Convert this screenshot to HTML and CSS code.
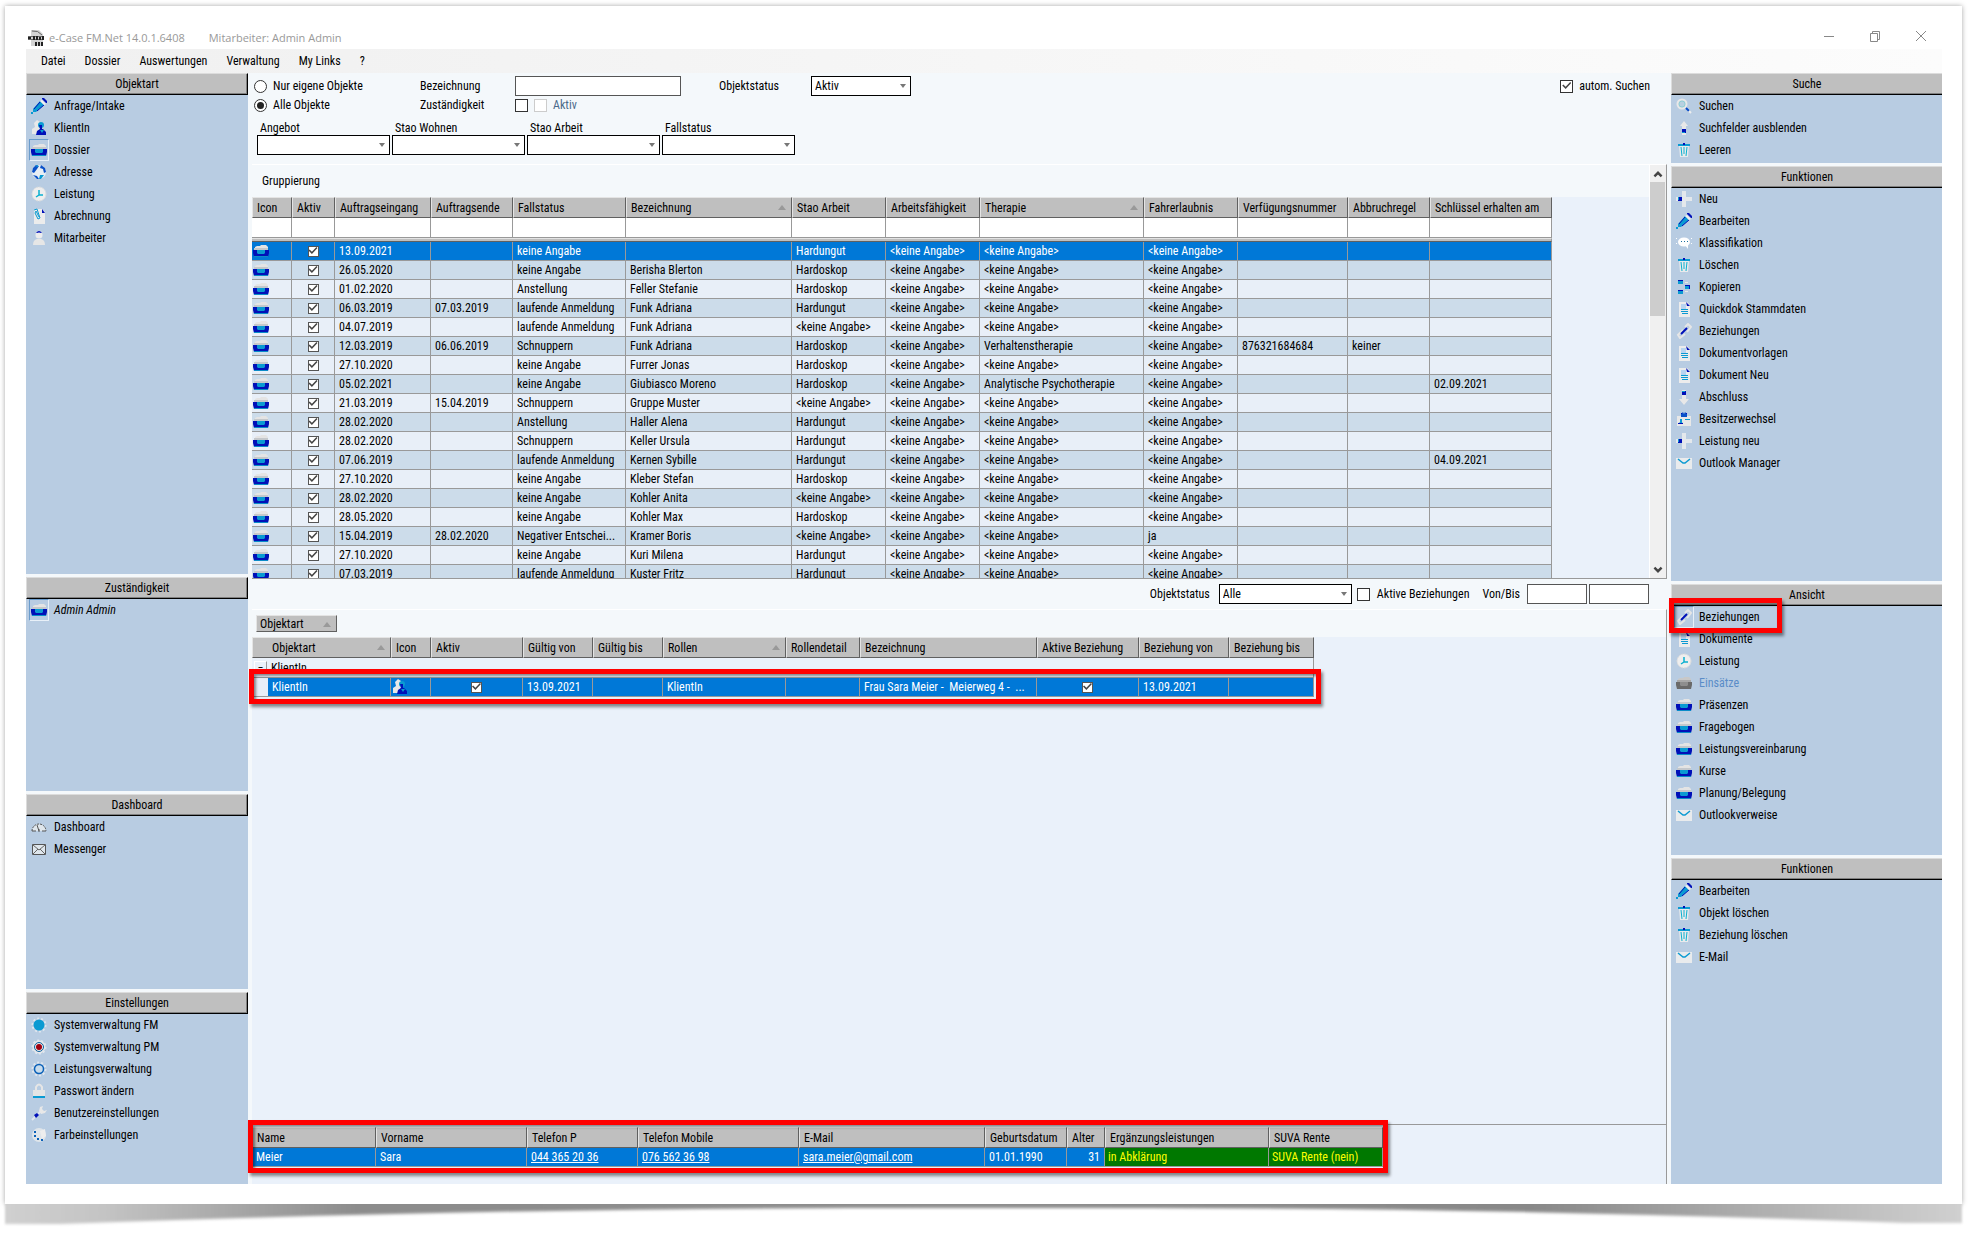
FILE: index.html
```html
<!DOCTYPE html>
<html lang="de">
<head>
<meta charset="utf-8">
<title>e-Case FM.Net 14.0.1.6408</title>
<link rel="stylesheet" href="styles.css">
</head>
<body>
<svg class="sprite" aria-hidden="true">
  <symbol id="box" viewBox="0 0 16 16"><path d="M2 6V4l2-1h3l1-1h5l2 2v2z" fill="#e4e4e4"/><path d="M1 5h14v2H1z" fill="#c4c8cc"/><path d="M0 7h16v3l-1 4H1l-1-4z" fill="#0010b8"/><path d="M4 7h8v3l-1 1H5l-1-1z" fill="#0a9ad2"/><path d="M1 13h14v1H1z" fill="#0a8cc8"/></symbol>
  <symbol id="boxoff" viewBox="0 0 16 16"><path d="M2 6V4l2-1h3l1-1h5l2 2v2z" fill="#c8c8c8"/><path d="M1 5h14v2H1z" fill="#a8a8a8"/><path d="M0 7h16v3l-1 4H1l-1-4z" fill="#6a6a6a"/><path d="M4 7h8v3l-1 1H5l-1-1z" fill="#8e8e8e"/></symbol>
  <symbol id="pen" viewBox="0 0 16 16"><path d="M2 11l7-8 4 4-8 7-3 0z" fill="#0a9ad2"/><path d="M3 11l6-7M6 13l7-6" stroke="#0010b8" stroke-width="1" fill="none"/><path d="M9 3l2-1 4 4-2 1z" fill="#f0f0f0"/><path d="M11 0h2l3 3v2l-1 0-4-4z" fill="#0010b8"/><path d="M0 14h2v2H0z" fill="#0a9ad2"/></symbol>
  <symbol id="person" viewBox="0 0 16 16"><path d="M1 14V9l3-2-1-4 3-3 3 2v6l-2 6z" fill="#e8e8e8"/><circle cx="10" cy="5" r="3" fill="#0a9ad2"/><path d="M8 5h3v4H9z" fill="#0010b8"/><path d="M5 15l1-4 3-2h3l3 3v3z" fill="#0010b8"/><path d="M9 10l2 3 2-3z" fill="#0a9ad2"/></symbol>
  <symbol id="globe" viewBox="0 0 16 16"><circle cx="8" cy="8" r="7" fill="#e8eef4"/><path d="M2 4l3-3 3 1-2 3-3 4-2-1zM10 1l4 3 1 4-2 1-1-4-3-1zM2 11l4 1 2 3H6z" fill="#0a50c8"/><path d="M9 11l4 0-3 4H8zM4 2l3-1v2z" fill="#0a9ad2"/></symbol>
  <symbol id="clock" viewBox="0 0 16 16"><circle cx="8" cy="8" r="7" fill="#eeeeee" stroke="#dcdcdc" stroke-width="1" stroke-dasharray="2 1"/><path d="M8 4v5h4M8 9l-3 2" stroke="#0ab0d0" stroke-width="1.500" fill="none"/></symbol>
  <symbol id="bill" viewBox="0 0 16 16"><path d="M3 1h8l3 3v12H3z" fill="#ececec"/><path d="M11 1l3 4h-3z" fill="#0010b8"/><path d="M3 2l3-1 3 9-2 1-3-6 1-2 3 6" stroke="#0a9ad2" fill="none"/></symbol>
  <symbol id="staff" viewBox="0 0 16 16"><circle cx="8" cy="5" r="3.500" fill="#ececec"/><path d="M5 3q3-4 6 0l-1 0q-2-1-4 0z" fill="#0010b8"/><path d="M2 15q0-5 4-6h4q4 1 4 6z" fill="#e6e6e6"/></symbol>
  <symbol id="search" viewBox="0 0 16 16"><circle cx="6" cy="6" r="4.500" fill="#b8d0e0" stroke="#e8e8e8" stroke-width="2"/><circle cx="6" cy="6" r="3" fill="none" stroke="#7cc" stroke-width=".6"/><path d="M10 10l3 3" stroke="#0a4cc8" stroke-width="2"/><path d="M13 13l2 2" stroke="#eee" stroke-width="2"/></symbol>
  <symbol id="up" viewBox="0 0 16 16"><path d="M8 1l4 5h-2v9H6V6H4z" fill="#e8e8e8"/><path d="M6 9h4v4H6z" fill="#0010b8"/><path d="M6 12h3v1H6z" fill="#0a9ad2"/></symbol>
  <symbol id="down" viewBox="0 0 16 16"><path d="M8 16l5-6h-3V1H6v9H3z" fill="#e8e8e8"/><path d="M6 2h4v4H6z" fill="#0010b8"/><path d="M6 2h3v1H6z" fill="#0a9ad2"/></symbol>
  <symbol id="bin" viewBox="0 0 16 16"><path d="M3 3h10l-1 12H4z" fill="#e8eaec"/><path d="M2 2h12v2H2z" fill="#0a9ad2"/><path d="M7 1h2v2H7z" fill="#0010b8"/><path d="M5 5l1 9M8 5v7M11 5l-1 9" stroke="#0ab0d0" fill="none"/></symbol>
  <symbol id="plus" viewBox="0 0 16 16"><path d="M6 0h4v6h6v4h-6v6H6v-6H0V6h6z" fill="#e4e8ec"/><path d="M2 6h4v4H2z" fill="#0010b8"/><path d="M2 6h1v3H2z" fill="#0a9ad2"/></symbol>
  <symbol id="bubble" viewBox="0 0 16 16"><ellipse cx="8" cy="7" rx="6" ry="4.500" fill="#fff"/><path d="M9 10l3 4 0-5zM0 3h1v1H0zM0 8h1v1H0zM15 3h1v1h-1zM15 8h1v1h-1z" fill="#fff"/><path d="M5 6h1v1H5zM8 6h1v1H8zM11 6h1v1h-1z" fill="#1a70a0"/></symbol>
  <symbol id="copy" viewBox="0 0 16 16"><path d="M2 1h5v4H2zM9 6h5v4H9zM2 11h5v4H2z" fill="#0a9ad2"/><path d="M2 1h5v1H2zM9 6h5v1H9zM2 11h5v1H2zM13 7h1v3h-1z" fill="#0010b8"/><path d="M9 3h3v1H9zM9 12h3v1H9z" fill="#e8e8e8"/></symbol>
  <symbol id="doc" viewBox="0 0 16 16"><path d="M3 1h8l3 3v12H3z" fill="#ececec"/><path d="M5 3h5v5H5z" fill="#b8d4f0"/><path d="M10 1l4 4h-3z" fill="#0010b8"/><path d="M5 8h7v1H5zM5 10h7v1H5zM6 12h6v1H6z" fill="#0a9ad2"/></symbol>
  <symbol id="link" viewBox="0 0 16 16"><path d="M9 4l3-3 3 3-4 5M7 7l-5 5 2 3 5-4" stroke="#e6e6e6" stroke-width="2" fill="none"/><path d="M5 11l6-6" stroke="#0010b8" stroke-width="2"/></symbol>
  <symbol id="owner" viewBox="0 0 16 16"><path d="M1 5h14v10H1z" fill="#e8e8e8"/><path d="M5 3l2-2 1 2 1-2 2 2v3H5z" fill="#0a50c8"/><path d="M4 8h2v3l1 2H2l2-2z" fill="#0a9ad2"/><path d="M2 12h5v1H2zM5 2h1v1H5zM10 2h1v1h-1z" fill="#0010b8"/><path d="M9 8h5v1H9z" fill="#0a9ad2"/></symbol>
  <symbol id="mail" viewBox="0 0 16 16"><path d="M0 3h16v11H0z" fill="#e9ebed"/><path d="M2 4l5 4h2l5-4" stroke="#0a9ad2" stroke-width="1.500" fill="none"/></symbol>
  <symbol id="gauge" viewBox="0 0 16 16"><path d="M1 12a7 7 0 1 1 14 0" fill="#dfe6ec" stroke="#555" stroke-dasharray="2 1"/><path d="M1 12h4M11 12h4M8 12L6 6M8 10v3" stroke="#555" fill="none"/></symbol>
  <symbol id="envelope" viewBox="0 0 16 16"><path d="M1.500 3.500h13v10h-13z" fill="#dfe6ec" stroke="#555"/><path d="M2 4l6 5 6-5M2 13l5-5M14 13L9 8" stroke="#666" fill="none"/></symbol>
  <symbol id="gearfull" viewBox="0 0 16 16"><circle cx="8" cy="8" r="6.500" fill="none" stroke="#dfe6ee" stroke-width="2" stroke-dasharray="2 2"/><circle cx="8" cy="8" r="5.500" fill="#0a9ad2"/></symbol>
  <symbol id="gearred" viewBox="0 0 16 16"><circle cx="8" cy="8" r="6.500" fill="#e8e8e8" stroke="#dfe6ee" stroke-width="2" stroke-dasharray="2 2"/><circle cx="8" cy="8" r="4.500" fill="#e8e8e8" stroke="#0a60a0"/><circle cx="8" cy="8" r="3" fill="#a00010"/></symbol>
  <symbol id="gear" viewBox="0 0 16 16"><circle cx="8" cy="8" r="6.500" fill="none" stroke="#dfe6ee" stroke-width="2" stroke-dasharray="2 2"/><circle cx="8" cy="8" r="4.500" fill="#c8dcec" stroke="#0a60b8" stroke-width="1.500"/></symbol>
  <symbol id="lock" viewBox="0 0 16 16"><path d="M5 8V4q3-5 6 0v4" stroke="#e6e6e6" stroke-width="2" fill="none"/><path d="M2 7h12v8H2z" fill="#e4e4e4"/><path d="M2 13h12v2H2z" fill="#0a9ad2"/></symbol>
  <symbol id="wrench" viewBox="0 0 16 16"><path d="M1 15l9-9" stroke="#dfe6ee" stroke-width="2"/><path d="M8 6l1-4 3-1-1 3 2 2 3-1-2 3-4 1z" fill="#e8e8e8"/><path d="M3 10l3-2 2 2-3 3z" fill="#0010b8"/></symbol>
  <symbol id="palette" viewBox="0 0 16 16"><circle cx="8" cy="8" r="7" fill="#dfe5ea"/><path d="M9 4l5-2 1 7-4 3z" fill="#eee"/><path d="M3 4h2v2H3zM3 8h2v2H3zM6 11h2v2H6zM10 12h2v2h-2z" fill="#0a60b8"/></symbol>
</svg>

<div class="paper">
  <header class="titlebar">
    <svg class="logo" viewBox="0 0 16 16" aria-hidden="true"><path d="M3 0h8l4 4v12H3z" fill="#d4d4d4"/><path d="M4 1q6-1 10 4" stroke="#666" fill="none"/><path d="M0 6h15v1H0zM0 9h15v1H0z" fill="#666"/><path d="M0 7h3v2H0zM5 6h2v4H5zM8 6h2v4H8zM11 7h2v3h-2zM14 6h2v4h-2zM7 12h2v4H7zM10 12h2v4h-2zM13 12h2v4h-2z" fill="#222"/></svg>
    <span class="app">e-Case FM.Net 14.0.1.6408</span>
    <span>Mitarbeiter: Admin Admin</span>
    <div class="winbtns">
      <button aria-label="Minimieren"><svg viewBox="0 0 12 12"><path d="M1 6.500h10"/></svg></button>
      <button aria-label="Wiederherstellen"><svg viewBox="0 0 12 12"><path d="M1.500 3.500h7v8h-7zM3.500 3V1.500h7v8H9"/></svg></button>
      <button aria-label="Schliessen"><svg viewBox="0 0 12 12"><path d="M1 1l10 10M11 1L1 11"/></svg></button>
    </div>
  </header>

  <div class="window">
    <nav class="menu">
      <button>Datei</button><button>Dossier</button><button>Auswertungen</button><button>Verwaltung</button><button>My Links</button><button>?</button>
    </nav>

    <div class="columns">
      <aside class="side left">
        <section class="panel p-objektart">
          <h2>Objektart</h2>
          <button class="item"><svg><use href="#pen"/></svg>Anfrage/Intake</button>
          <button class="item"><svg><use href="#person"/></svg>KlientIn</button>
          <button class="item pressed"><svg><use href="#box"/></svg>Dossier</button>
          <button class="item"><svg><use href="#globe"/></svg>Adresse</button>
          <button class="item"><svg><use href="#clock"/></svg>Leistung</button>
          <button class="item"><svg><use href="#bill"/></svg>Abrechnung</button>
          <button class="item"><svg><use href="#staff"/></svg>Mitarbeiter</button>
        </section>
        <section class="panel p-zustaendigkeit">
          <h2>Zuständigkeit</h2>
          <button class="item pressed"><svg><use href="#box"/></svg><em>Admin Admin</em></button>
        </section>
        <section class="panel p-dashboard">
          <h2>Dashboard</h2>
          <button class="item"><svg><use href="#gauge"/></svg>Dashboard</button>
          <button class="item"><svg><use href="#envelope"/></svg>Messenger</button>
        </section>
        <section class="panel p-rest">
          <h2>Einstellungen</h2>
          <button class="item"><svg><use href="#gearfull"/></svg>Systemverwaltung FM</button>
          <button class="item"><svg><use href="#gearred"/></svg>Systemverwaltung PM</button>
          <button class="item"><svg><use href="#gear"/></svg>Leistungsverwaltung</button>
          <button class="item"><svg><use href="#lock"/></svg>Passwort ändern</button>
          <button class="item"><svg><use href="#wrench"/></svg>Benutzereinstellungen</button>
          <button class="item"><svg><use href="#palette"/></svg>Farbeinstellungen</button>
        </section>
      </aside>

      <main class="center">
        <form class="filter">
          <div class="criteria">
            <label><input type="radio" name="scope">Nur eigene Objekte</label>
            <label for="bez">Bezeichnung</label>
            <input type="text" id="bez">
            <label for="ostat">Objektstatus</label>
            <select id="ostat"><option>Aktiv</option></select>
            <label class="auto"><input type="checkbox" checked>autom. Suchen</label>
            <label><input type="radio" name="scope" checked>Alle Objekte</label>
            <label for="zust">Zuständigkeit</label>
            <div class="pair"><input type="checkbox" id="zust"><label class="dim"><input type="checkbox" disabled>Aktiv</label></div>
          </div>
          <div class="combos">
            <label>Angebot<select><option></option></select></label>
            <label>Stao Wohnen<select><option></option></select></label>
            <label>Stao Arbeit<select><option></option></select></label>
            <label>Fallstatus<select><option></option></select></label>
          </div>
        </form>

        <section class="grid-area">
          <div class="grid-body">
            <div class="groupbar">Gruppierung</div>
            <table class="grid orders">
              <colgroup><col class="w40"><col class="w43"><col class="w96"><col class="w82"><col class="w113"><col class="w166"><col class="w94"><col class="w94"><col class="w164"><col class="w94"><col class="w110"><col class="w82"><col class="w122"></colgroup>
              <thead>
                <tr><th>Icon</th><th>Aktiv</th><th>Auftragseingang</th><th>Auftragsende</th><th>Fallstatus</th><th class="sorted">Bezeichnung</th><th>Stao Arbeit</th><th>Arbeitsfähigkeit</th><th class="sorted">Therapie</th><th>Fahrerlaubnis</th><th>Verfügungsnummer</th><th>Abbruchregel</th><th>Schlüssel erhalten am</th></tr>
                <tr class="search"><td></td><td></td><td></td><td></td><td></td><td></td><td></td><td></td><td></td><td></td><td></td><td></td><td></td></tr>
                <tr class="band"><td colspan="13"></td></tr>
              </thead>
              <tbody>
                <tr class="selected"><td><svg><use href="#box"/></svg></td><td><input type="checkbox" checked aria-label="Aktiv"></td><td>13.09.2021</td><td></td><td>keine Angabe</td><td></td><td>Hardungut</td><td>&lt;keine Angabe&gt;</td><td>&lt;keine Angabe&gt;</td><td>&lt;keine Angabe&gt;</td><td></td><td></td><td></td></tr>
                <tr><td><svg><use href="#box"/></svg></td><td><input type="checkbox" checked aria-label="Aktiv"></td><td>26.05.2020</td><td></td><td>keine Angabe</td><td>Berisha Blerton</td><td>Hardoskop</td><td>&lt;keine Angabe&gt;</td><td>&lt;keine Angabe&gt;</td><td>&lt;keine Angabe&gt;</td><td></td><td></td><td></td></tr>
                <tr><td><svg><use href="#box"/></svg></td><td><input type="checkbox" checked aria-label="Aktiv"></td><td>01.02.2020</td><td></td><td>Anstellung</td><td>Feller Stefanie</td><td>Hardoskop</td><td>&lt;keine Angabe&gt;</td><td>&lt;keine Angabe&gt;</td><td>&lt;keine Angabe&gt;</td><td></td><td></td><td></td></tr>
                <tr><td><svg><use href="#box"/></svg></td><td><input type="checkbox" checked aria-label="Aktiv"></td><td>06.03.2019</td><td>07.03.2019</td><td>laufende Anmeldung</td><td>Funk Adriana</td><td>Hardungut</td><td>&lt;keine Angabe&gt;</td><td>&lt;keine Angabe&gt;</td><td>&lt;keine Angabe&gt;</td><td></td><td></td><td></td></tr>
                <tr><td><svg><use href="#box"/></svg></td><td><input type="checkbox" checked aria-label="Aktiv"></td><td>04.07.2019</td><td></td><td>laufende Anmeldung</td><td>Funk Adriana</td><td>&lt;keine Angabe&gt;</td><td>&lt;keine Angabe&gt;</td><td>&lt;keine Angabe&gt;</td><td>&lt;keine Angabe&gt;</td><td></td><td></td><td></td></tr>
                <tr><td><svg><use href="#box"/></svg></td><td><input type="checkbox" checked aria-label="Aktiv"></td><td>12.03.2019</td><td>06.06.2019</td><td>Schnuppern</td><td>Funk Adriana</td><td>Hardoskop</td><td>&lt;keine Angabe&gt;</td><td>Verhaltenstherapie</td><td>&lt;keine Angabe&gt;</td><td>876321684684</td><td>keiner</td><td></td></tr>
                <tr><td><svg><use href="#box"/></svg></td><td><input type="checkbox" checked aria-label="Aktiv"></td><td>27.10.2020</td><td></td><td>keine Angabe</td><td>Furrer Jonas</td><td>Hardoskop</td><td>&lt;keine Angabe&gt;</td><td>&lt;keine Angabe&gt;</td><td>&lt;keine Angabe&gt;</td><td></td><td></td><td></td></tr>
                <tr><td><svg><use href="#box"/></svg></td><td><input type="checkbox" checked aria-label="Aktiv"></td><td>05.02.2021</td><td></td><td>keine Angabe</td><td>Giubiasco Moreno</td><td>Hardoskop</td><td>&lt;keine Angabe&gt;</td><td>Analytische Psychotherapie</td><td>&lt;keine Angabe&gt;</td><td></td><td></td><td>02.09.2021</td></tr>
                <tr><td><svg><use href="#box"/></svg></td><td><input type="checkbox" checked aria-label="Aktiv"></td><td>21.03.2019</td><td>15.04.2019</td><td>Schnuppern</td><td>Gruppe Muster</td><td>&lt;keine Angabe&gt;</td><td>&lt;keine Angabe&gt;</td><td>&lt;keine Angabe&gt;</td><td>&lt;keine Angabe&gt;</td><td></td><td></td><td></td></tr>
                <tr><td><svg><use href="#box"/></svg></td><td><input type="checkbox" checked aria-label="Aktiv"></td><td>28.02.2020</td><td></td><td>Anstellung</td><td>Haller Alena</td><td>Hardungut</td><td>&lt;keine Angabe&gt;</td><td>&lt;keine Angabe&gt;</td><td>&lt;keine Angabe&gt;</td><td></td><td></td><td></td></tr>
                <tr><td><svg><use href="#box"/></svg></td><td><input type="checkbox" checked aria-label="Aktiv"></td><td>28.02.2020</td><td></td><td>Schnuppern</td><td>Keller Ursula</td><td>Hardungut</td><td>&lt;keine Angabe&gt;</td><td>&lt;keine Angabe&gt;</td><td>&lt;keine Angabe&gt;</td><td></td><td></td><td></td></tr>
                <tr><td><svg><use href="#box"/></svg></td><td><input type="checkbox" checked aria-label="Aktiv"></td><td>07.06.2019</td><td></td><td>laufende Anmeldung</td><td>Kernen Sybille</td><td>Hardungut</td><td>&lt;keine Angabe&gt;</td><td>&lt;keine Angabe&gt;</td><td>&lt;keine Angabe&gt;</td><td></td><td></td><td>04.09.2021</td></tr>
                <tr><td><svg><use href="#box"/></svg></td><td><input type="checkbox" checked aria-label="Aktiv"></td><td>27.10.2020</td><td></td><td>keine Angabe</td><td>Kleber Stefan</td><td>Hardoskop</td><td>&lt;keine Angabe&gt;</td><td>&lt;keine Angabe&gt;</td><td>&lt;keine Angabe&gt;</td><td></td><td></td><td></td></tr>
                <tr><td><svg><use href="#box"/></svg></td><td><input type="checkbox" checked aria-label="Aktiv"></td><td>28.02.2020</td><td></td><td>keine Angabe</td><td>Kohler Anita</td><td>&lt;keine Angabe&gt;</td><td>&lt;keine Angabe&gt;</td><td>&lt;keine Angabe&gt;</td><td>&lt;keine Angabe&gt;</td><td></td><td></td><td></td></tr>
                <tr><td><svg><use href="#box"/></svg></td><td><input type="checkbox" checked aria-label="Aktiv"></td><td>28.05.2020</td><td></td><td>keine Angabe</td><td>Kohler Max</td><td>Hardoskop</td><td>&lt;keine Angabe&gt;</td><td>&lt;keine Angabe&gt;</td><td>&lt;keine Angabe&gt;</td><td></td><td></td><td></td></tr>
                <tr><td><svg><use href="#box"/></svg></td><td><input type="checkbox" checked aria-label="Aktiv"></td><td>15.04.2019</td><td>28.02.2020</td><td>Negativer Entschei...</td><td>Kramer Boris</td><td>&lt;keine Angabe&gt;</td><td>&lt;keine Angabe&gt;</td><td>&lt;keine Angabe&gt;</td><td>ja</td><td></td><td></td><td></td></tr>
                <tr><td><svg><use href="#box"/></svg></td><td><input type="checkbox" checked aria-label="Aktiv"></td><td>27.10.2020</td><td></td><td>keine Angabe</td><td>Kuri Milena</td><td>Hardungut</td><td>&lt;keine Angabe&gt;</td><td>&lt;keine Angabe&gt;</td><td>&lt;keine Angabe&gt;</td><td></td><td></td><td></td></tr>
                <tr><td><svg><use href="#box"/></svg></td><td><input type="checkbox" checked aria-label="Aktiv"></td><td>07.03.2019</td><td></td><td>laufende Anmeldung</td><td>Kuster Fritz</td><td>Hardungut</td><td>&lt;keine Angabe&gt;</td><td>&lt;keine Angabe&gt;</td><td>&lt;keine Angabe&gt;</td><td></td><td></td><td></td></tr>
              </tbody>
            </table>
          </div>
          <div class="scrollbar">
            <button aria-label="Nach oben"><svg viewBox="0 0 10 10"><path d="M2 7l3-3 3 3"/></svg></button>
            <div class="thumb"></div>
            <button aria-label="Nach unten"><svg viewBox="0 0 10 10"><path d="M2 3l3 3 3-3"/></svg></button>
          </div>
        </section>

        <form class="relbar">
          <label for="rstat">Objektstatus</label>
          <select id="rstat"><option>Alle</option></select>
          <label class="active"><input type="checkbox">Aktive Beziehungen</label>
          <label for="von">Von/Bis</label>
          <input type="text" id="von"><input type="text" aria-label="Bis">
        </form>

        <section class="rel-area">
          <div class="groupbar"><button class="grouper">Objektart</button></div>
          <div class="marked">
            <table class="grid relations">
              <colgroup><col class="w139"><col class="w40"><col class="w92"><col class="w70"><col class="w70"><col class="w123"><col class="w74"><col class="w177"><col class="w102"><col class="w90"><col class="w85"></colgroup>
              <thead><tr><th class="sorted lead">Objektart</th><th>Icon</th><th>Aktiv</th><th>Gültig von</th><th>Gültig bis</th><th class="sorted">Rollen</th><th>Rollendetail</th><th>Bezeichnung</th><th>Aktive Beziehung</th><th>Beziehung von</th><th>Beziehung bis</th></tr></thead>
              <tbody>
                <tr class="group"><td colspan="11"><button class="toggle" aria-label="Zuklappen">−</button>KlientIn</td></tr>
                <tr class="selected"><td class="rowhead">KlientIn</td><td><svg><use href="#person"/></svg></td><td><input type="checkbox" checked aria-label="Aktiv"></td><td>13.09.2021</td><td></td><td>KlientIn</td><td></td><td>Frau Sara Meier -&nbsp; Meierweg 4 -&nbsp; ...</td><td><input type="checkbox" checked aria-label="Aktive Beziehung"></td><td>13.09.2021</td><td></td></tr>
              </tbody>
            </table>
            <div class="mark mark-row"></div>
          </div>
        </section>

        <section class="detail">
          <div class="marked">
            <table class="grid person">
              <colgroup><col class="w124"><col class="w151"><col class="w111"><col class="w161"><col class="w186"><col class="w82"><col class="w38"><col class="w164"><col class="w114"></colgroup>
              <thead><tr><th>Name</th><th>Vorname</th><th>Telefon P</th><th>Telefon Mobile</th><th>E-Mail</th><th>Geburtsdatum</th><th>Alter</th><th>Ergänzungsleistungen</th><th>SUVA Rente</th></tr></thead>
              <tbody><tr class="selected"><td>Meier</td><td>Sara</td><td><a href="#">044 365 20 36</a></td><td><a href="#">076 562 36 98</a></td><td><a href="#">sara.meier@gmail.com</a></td><td>01.01.1990</td><td class="num">31</td><td class="flag">in Abklärung</td><td class="flag">SUVA Rente (nein)</td></tr></tbody>
            </table>
            <div class="mark mark-detail"></div>
          </div>
        </section>
      </main>

      <aside class="side right">
        <section class="panel p-suche">
          <h2>Suche</h2>
          <button class="item"><svg><use href="#search"/></svg>Suchen</button>
          <button class="item"><svg><use href="#up"/></svg>Suchfelder ausblenden</button>
          <button class="item"><svg><use href="#bin"/></svg>Leeren</button>
        </section>
        <section class="panel p-funktionen">
          <h2>Funktionen</h2>
          <button class="item"><svg><use href="#plus"/></svg>Neu</button>
          <button class="item"><svg><use href="#pen"/></svg>Bearbeiten</button>
          <button class="item"><svg><use href="#bubble"/></svg>Klassifikation</button>
          <button class="item"><svg><use href="#bin"/></svg>Löschen</button>
          <button class="item"><svg><use href="#copy"/></svg>Kopieren</button>
          <button class="item"><svg><use href="#doc"/></svg>Quickdok Stammdaten</button>
          <button class="item"><svg><use href="#link"/></svg>Beziehungen</button>
          <button class="item"><svg><use href="#doc"/></svg>Dokumentvorlagen</button>
          <button class="item"><svg><use href="#doc"/></svg>Dokument Neu</button>
          <button class="item"><svg><use href="#down"/></svg>Abschluss</button>
          <button class="item"><svg><use href="#owner"/></svg>Besitzerwechsel</button>
          <button class="item"><svg><use href="#plus"/></svg>Leistung neu</button>
          <button class="item"><svg><use href="#mail"/></svg>Outlook Manager</button>
        </section>
        <section class="panel p-ansicht">
          <h2>Ansicht</h2>
          <div class="marked">
            <button class="item pressed"><svg><use href="#link"/></svg>Beziehungen</button>
            <div class="mark mark-item"></div>
          </div>
          <button class="item"><svg><use href="#doc"/></svg>Dokumente</button>
          <button class="item"><svg><use href="#clock"/></svg>Leistung</button>
          <button class="item" disabled><svg><use href="#boxoff"/></svg>Einsätze</button>
          <button class="item"><svg><use href="#box"/></svg>Präsenzen</button>
          <button class="item"><svg><use href="#box"/></svg>Fragebogen</button>
          <button class="item"><svg><use href="#box"/></svg>Leistungsvereinbarung</button>
          <button class="item"><svg><use href="#box"/></svg>Kurse</button>
          <button class="item"><svg><use href="#box"/></svg>Planung/Belegung</button>
          <button class="item"><svg><use href="#mail"/></svg>Outlookverweise</button>
        </section>
        <section class="panel p-rest">
          <h2>Funktionen</h2>
          <button class="item"><svg><use href="#pen"/></svg>Bearbeiten</button>
          <button class="item"><svg><use href="#bin"/></svg>Objekt löschen</button>
          <button class="item"><svg><use href="#bin"/></svg>Beziehung löschen</button>
          <button class="item"><svg><use href="#mail"/></svg>E-Mail</button>
        </section>
      </aside>
    </div>
  </div>
</div>
<svg class="curl" viewBox="0 0 1976 29" preserveAspectRatio="none" aria-hidden="true">
  <defs>
    <linearGradient id="curlfill"><stop offset="0" stop-color="#d0d0d0"/><stop offset=".05" stop-color="#c4c4c4"/><stop offset=".18" stop-color="#8c8c8c"/><stop offset=".5" stop-color="#8e8e8e"/><stop offset=".78" stop-color="#888"/><stop offset=".9" stop-color="#b0b0b0"/><stop offset="1" stop-color="#d0d0d0"/></linearGradient>
    <filter id="soft" x="-1%" y="-20%" width="102%" height="150%"><feGaussianBlur stdDeviation="1 1.500"/></filter>
  </defs>
  <path d="M5-6H1962V19H1905Q1500 4 1150 4H850Q480 5 60 20H5z" fill="url(#curlfill)" filter="url(#soft)"/>
</svg>
</body>
</html>
```
FILE: styles.css
```css
* { box-sizing: border-box; }

body {
  margin: 0;
  min-height: 100vh;
  display: flex;
  flex-direction: column;
  background: #fff;
  color: #000;
  font: 12px/14px "Roboto Condensed", "Liberation Sans", Arial, sans-serif;
}

button, input, select { font: inherit; color: inherit; margin: 0; }
button { border: 0; padding: 0; background: none; text-align: left; }
.sprite { display: none; }

/* page sheet */
.paper {
  flex: 1;
  display: flex;
  flex-direction: column;
  margin: 6px 14px 0 5px;
  padding: 0 20px 20px 21px;
  background: #fff;
  box-shadow: 0 0 5px rgba(0, 0, 0, .35);
}
.curl { position: relative; flex: none; display: block; width: 100%; height: 29px; }

.titlebar {
  display: flex;
  align-items: center;
  height: 43px;
  padding: 21px 15px 0 2px;
  color: #999;
  font: 11px/16px "Open Sans", "Noto Sans", sans-serif;
}
.logo { width: 16px; height: 16px; margin-right: 5px; }
.app { margin-right: 24px; }
.winbtns { display: flex; gap: 34px; margin-left: auto; margin-bottom: 4px; }
.winbtns svg { display: block; width: 12px; height: 12px; fill: none; stroke: #888; }

.window { flex: 1; display: flex; flex-direction: column; background: #f4f8fb; }
.menu {
  display: flex;
  gap: 19px;
  height: 24px;
  padding: 0 15px;
  background: linear-gradient(90deg, #f0f0f0, #fcfcfc);
}

.columns { flex: 1; display: grid; grid-template-columns: 222px minmax(0, 1fr) 271px; }
.center { display: flex; flex-direction: column; }

/* side panels */
.side { display: flex; flex-direction: column; gap: 3px; }
.panel { display: flex; flex-direction: column; background: #b8cce2; }
.panel h2 {
  height: 22px;
  margin: 0;
  border: solid;
  border-width: 1px 0 1px 1px;
  border-color: #dcdcdc #000 #000 #dcdcdc;
  box-shadow: inset 0 -1px #808080;
  background: #bfbfbf;
  font: inherit;
  line-height: 20px;
  text-align: center;
}
.left h2 { border-right-width: 1px; box-shadow: inset -1px -1px #808080; }
.p-objektart { min-height: 501px; }
.p-zustaendigkeit { min-height: 214px; }
.p-dashboard { min-height: 195px; }
.p-suche { min-height: 90px; }
.p-funktionen { min-height: 415px; }
.p-ansicht { min-height: 271px; }
.p-rest { flex: 1; }

.item { display: flex; align-items: center; gap: 5px; width: 100%; height: 22px; padding-left: 3px; }
.item svg { width: 20px; height: 22px; padding: 2px 1px; border: 1px solid transparent; }
.item.pressed svg { border-color: #6a9ccc #e8f0f8 #e8f0f8 #6a9ccc; }
.item:disabled { color: #5a8cc8; }

/* form controls */
input[type="text"], select {
  height: 20px;
  border: 1px solid #555;
  border-radius: 0;
  background: #fff;
  padding: 0 3px;
}
select {
  appearance: none;
  border-color: #000;
  background: #fff url("data:image/svg+xml,%3Csvg xmlns='http://www.w3.org/2000/svg' width='6' height='4'%3E%3Cpath d='M0 0h6L3 4z' fill='%23777'/%3E%3C/svg%3E") no-repeat right 4px center;
}
input[type="checkbox"], input[type="radio"] {
  appearance: none;
  flex: none;
  display: grid;
  place-items: center;
  width: 13px;
  height: 13px;
  border: 1px solid #333;
  background: #fff;
}
input[type="radio"] { border-radius: 50%; }
input[type="radio"]:checked::before { content: ""; width: 7px; height: 7px; border-radius: 50%; background: #222; }
input[type="checkbox"]:checked::before {
  content: "";
  width: 9px;
  height: 9px;
  background: #444;
  clip-path: polygon(0 45%, 12% 33%, 38% 58%, 88% 5%, 100% 18%, 38% 84%);
}
input[type="checkbox"]:disabled { border-color: #ccc; }

/* search form */
.filter { flex: none; height: 91px; padding: 3px 0 0 6px; }
.criteria {
  display: grid;
  grid-template-columns: 166px 95px 204px 92px 100px 1fr;
  grid-template-rows: 20px 18px;
  align-items: center;
}
.criteria label, .pair { display: flex; align-items: center; gap: 6px; }
.criteria input[type="text"] { width: 166px; }
.criteria .auto { justify-self: end; padding-right: 21px; }
.dim { color: #4a6a8a; }
.combos { display: flex; gap: 2px; margin: 7px 0 0 3px; }
.combos label { width: 133px; text-indent: 3px; }
.combos select { display: block; width: 100%; }

/* data grids */
.grid-area {
  flex: none;
  display: flex;
  height: 415px;
  margin: 0 4px 0 4px;
  border: solid #999;
  border-width: 1px 1px 1px 0;
  border-top-color: #fff;
}
.grid-body { flex: 1; min-width: 0; overflow: hidden; background: #eaf1fa; }
.groupbar { display: flex; align-items: center; height: 32px; padding-left: 10px; background: #f4f8fb; }

.grid { table-layout: fixed; border-collapse: separate; border-spacing: 0; width: 0; }
.grid th {
  position: relative;
  height: 21px;
  padding: 0 4px;
  border: solid;
  border-width: 1px;
  border-color: #e4e4e4 #606060 #606060 #e4e4e4;
  background: #bfbfbf;
  font-weight: inherit;
  text-align: left;
  white-space: nowrap;
}
.sorted::after, .grouper::after {
  content: "";
  position: absolute;
  right: 5px;
  top: 7px;
  border: solid transparent;
  border-width: 0 4px 5px;
  border-bottom-color: #999;
}
.grid td {
  height: 19px;
  padding: 0 4px;
  border: solid #999;
  border-width: 0 1px 1px 0;
  background: #e8eff8;
  white-space: nowrap;
  overflow: hidden;
}
.grid td svg { display: block; width: 16px; height: 16px; margin-left: -3px; }
.grid td input { width: 11px; height: 11px; margin: 0 auto; border-color: #555; }
.grid .search td { height: 20px; background: #fff; }
.grid .band td { height: 4px; padding: 0; border-top: 1px solid #e4e4e4; border-bottom-color: #606060; background: #bfbfbf; }
.orders tbody tr:nth-child(even) td { background: #ccdcea; }
.grid tbody .selected td { background: #0078d7; color: #fff; }

.w38 { width: 38px; } .w40 { width: 40px; } .w43 { width: 43px; } .w70 { width: 70px; }
.w74 { width: 74px; } .w82 { width: 82px; } .w85 { width: 85px; } .w90 { width: 90px; }
.w92 { width: 92px; } .w94 { width: 94px; } .w96 { width: 96px; } .w102 { width: 102px; }
.w110 { width: 110px; } .w111 { width: 111px; } .w113 { width: 113px; } .w114 { width: 114px; }
.w122 { width: 122px; } .w123 { width: 123px; } .w124 { width: 124px; } .w139 { width: 139px; }
.w151 { width: 151px; } .w161 { width: 161px; } .w164 { width: 164px; } .w166 { width: 166px; }
.w177 { width: 177px; } .w186 { width: 186px; }

.scrollbar { flex: none; display: flex; flex-direction: column; width: 17px; border-left: 1px solid #fff; background: #f0f0f0; }
.scrollbar button { display: grid; place-items: center; height: 17px; }
.scrollbar button:last-child { margin-top: auto; }
.scrollbar svg { width: 12px; height: 12px; fill: none; stroke: #444; stroke-width: 2; }
.thumb { height: 134px; margin-right: 1px; background: #cdcdcd; }

/* relations */
.relbar { flex: none; display: flex; align-items: center; height: 30px; padding-right: 22px; justify-content: flex-end; }
.relbar select { width: 133px; margin: 0 5px 0 9px; }
.relbar .active { display: flex; align-items: center; gap: 7px; margin-right: 13px; }
.relbar input[type="text"] { width: 60px; margin-left: 2px; }
.relbar #von { margin-left: 7px; }

.rel-area {
  flex: 1;
  margin: 0 4px;
  border: solid #999;
  border-width: 1px 1px 1px 0;
  border-top-color: #fff;
  background: #eaf1fa;
}
.rel-area .groupbar { height: 27px; padding-left: 4px; }
.grouper {
  position: relative;
  width: 81px;
  height: 17px;
  padding-left: 3px;
  border: 1px solid;
  border-color: #e4e4e4 #606060 #606060 #e4e4e4;
  background: #bfbfbf;
}
.grouper::after { top: 6px; }
.marked { position: relative; width: max-content; }
.grid .lead { padding-left: 19px; }
.grid .group td { height: 20px; padding-left: 2px; background: #eaf1fa; }
.toggle {
  width: 13px;
  height: 13px;
  margin-right: 4px;
  border: 1px solid;
  border-color: #fff #999 #999 #fff;
  line-height: 10px;
  text-align: center;
}
.grid tbody .selected .rowhead { padding-left: 20px; box-shadow: inset 16px 0 #e8eff8; }

/* contact details */
.detail { flex: none; height: 59px; margin: 0 4px; padding-top: 2px; border-right: 1px solid #999; background: #eaf1fa; }
.person a { color: inherit; }
.grid .num { text-align: right; }
.grid tbody .selected .flag { padding-left: 3px; background: #007800; color: #ff0; }

/* red callout frames */
.mark { position: absolute; border: 5px solid #f00; box-shadow: 2px 3px 3px rgba(0, 0, 0, .45), inset 2px 2px 3px rgba(0, 0, 0, .45); pointer-events: none; }
.mark-row { inset: 32px -7px auto -3px; height: 35px; }
.mark-detail { inset: -7px -5px auto -4px; height: 53px; }
.mark-item { inset: -8px auto auto -2px; width: 113px; height: 35px; z-index: 1; }
```
